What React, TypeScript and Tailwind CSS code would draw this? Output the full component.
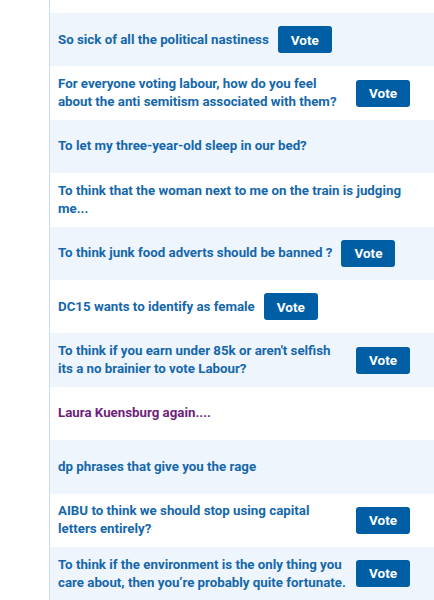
const threads: { title: string; vote?: boolean; visited?: boolean }[] = [
  { title: "So sick of all the political nastiness", vote: true },
  { title: "For everyone voting labour, how do you feel about the anti semitism associated with them?", vote: true },
  { title: "To let my three-year-old sleep in our bed?" },
  { title: "To think that the woman next to me on the train is judging me..." },
  { title: "To think junk food adverts should be banned ?", vote: true },
  { title: "DC15 wants to identify as female", vote: true },
  { title: "To think if you earn under 85k or aren't selfish its a no brainier to vote Labour?", vote: true },
  { title: "Laura Kuensburg again....", visited: true },
  { title: "dp phrases that give you the rage" },
  { title: "AIBU to think we should stop using capital letters entirely?", vote: true },
  { title: "To think if the environment is the only thing you care about, then you\u2019re probably quite fortunate.", vote: true },
];

function Row({ title, vote, visited, shaded }: { title: string; vote?: boolean; visited?: boolean; shaded: boolean }) {
  return (
    <div
      className={`flex h-[53.4px] items-center pl-2 pr-6 ${shaded ? "bg-[#eef5fd]" : "bg-white"}`}
    >
      <a
        href="#"
        className={`text-[13.3px] font-bold leading-[18px] ${visited ? "text-[#6e1f7c]" : "text-[#1467ab]"}`}
      >
        {title}
      </a>
      {vote && (
        <button className="ml-[9px] h-[27px] w-[54px] shrink-0 rounded-[3px] bg-[#005ea5] text-[13.5px] font-bold text-white">
          Vote
        </button>
      )}
    </div>
  );
}

export default function App() {
  return (
    <div className="flex h-[600px] w-[434px] overflow-hidden bg-white font-['Roboto',sans-serif]">
      <div className="w-[49px] shrink-0" />
      <div className="flex-1 border-l-[1.5px] border-[#cbdff4]">
        <div className="h-[13px] bg-white" />
        {threads.map((t, i) => (
          <Row key={i} {...t} shaded={i % 2 === 0} />
        ))}
      </div>
    </div>
  );
}
